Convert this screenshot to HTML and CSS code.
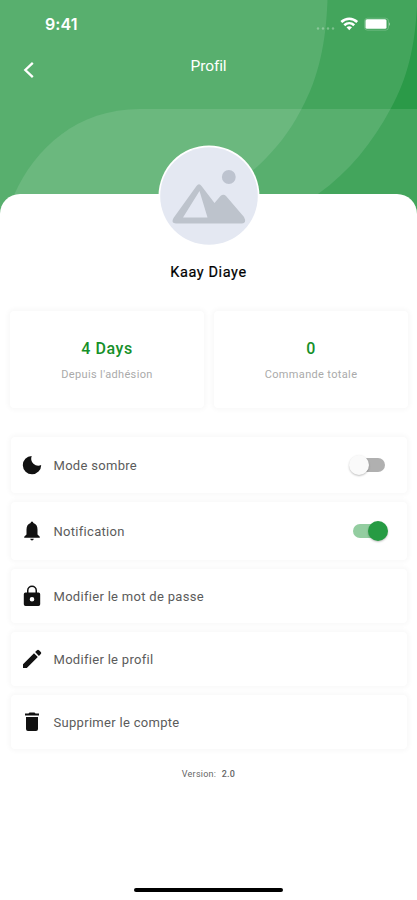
FILE: index.html
```html
<!DOCTYPE html>
<html lang="fr">
<head>
<meta charset="utf-8">
<meta name="viewport" content="width=device-width, initial-scale=1">
<title>Profil</title>
<link rel="stylesheet" href="styles.css">
</head>
<body>
<div class="screen">
  <header class="header">
    <svg class="backdrop" viewBox="0 0 417 220" aria-hidden="true">
      <path class="wave" d="M0 0H327.500C326 42 319 77 301.500 109C289 133 276 149 258 166C240 182 225 190 200 200L190 220H0Z"/>
      <path class="wave" d="M0 0H417V6C415 45 408 78 390.500 109C373 142 349 172 318 194C305 204 290 212 270 220H0Z"/>
      <path class="wave" d="M14 195C35 148 77 109 140 109H417V220H14Z"/>
    </svg>
    <div class="status">
      <span class="time">9:41</span>
      <svg class="indicators" width="76" height="20" viewBox="0 0 76 20">
        <g fill="#fff" opacity=".3"><circle cx="2" cy="14.500" r="1.200"/><circle cx="7" cy="14.500" r="1.200"/><circle cx="12" cy="14.500" r="1.200"/><circle cx="17" cy="14.500" r="1.200"/></g>
        <g fill="none" stroke="#fff" stroke-width="2.600"><path d="M25.300 8C30 3.600 36.500 3.600 41.200 8"/><path d="M28.300 11.300C31.300 8.500 35.200 8.500 38.200 11.300"/></g>
        <path d="M30.500 13.300Q33.250 11.100 36 13.300L33.250 16.200Z" fill="#fff"/>
        <rect x="48.500" y="4.200" width="24" height="12" rx="3" fill="none" stroke="#fff" opacity=".2"/>
        <rect x="49.500" y="5.200" width="21" height="9.600" rx="1.500" fill="#fff"/>
        <path d="M73 8.200Q75 10 73 12Z" fill="#fff" opacity=".5"/>
      </svg>
    </div>
    <div class="topbar">
      <svg class="back" width="14" height="18" viewBox="0 0 14 18"><path d="M12.800 1.800L5.300 9L12.800 16.200"/></svg>
      <h1>Profil</h1>
    </div>
  </header>
  <main class="sheet">
    <svg class="avatar" width="102" height="102" viewBox="0 0 102 102">
      <circle cx="51" cy="51" r="50.500" fill="#fff"/>
      <circle cx="51" cy="51" r="48.800" fill="#e4e8f2"/>
      <circle cx="70.800" cy="32" r="6.900" fill="#bdc3cf"/>
      <path d="M15.500 73L38.500 41Q41 37.500 43.500 41L56.500 58L62.500 51Q65.500 48.500 68 51L86 72Q89 78 84 78.500H18Q12.500 78 15.500 73ZM41.500 46L25 72.500H49.500Z" fill="#bdc3cc" fill-rule="evenodd"/>
    </svg>
    <h2 class="name">Kaay Diaye</h2>
    <section class="stats">
      <div class="stat"><strong>4 Days</strong><span class="caption">Depuis l'adhésion</span></div>
      <div class="stat"><strong>0</strong><span class="caption">Commande totale</span></div>
    </section>
    <section class="options">
      <div class="row theme">
        <svg class="icon" viewBox="0 0 20 20"><path d="M9.700.9A7.200 7.200 0 0 0 19.200 10.100A9.200 9.200 0 1 1 9.700.9Z"/></svg>
        <span class="label">Mode sombre</span><span class="switch"></span>
      </div>
      <div class="row alerts">
        <svg class="icon" viewBox="0 0 20 20"><path d="M10 .5Q11.300.5 11.400 2Q15.500 3.400 15.500 8.500V13.500L17.800 15.800V16.700H2.200V15.800L4.500 13.500V8.500Q4.500 3.400 8.600 2Q8.700.5 10 .5ZM8.200 17.700H11.800Q11.500 19.500 10 19.500Q8.500 19.500 8.200 17.700Z"/></svg>
        <span class="label">Notification</span><span class="switch on"></span>
      </div>
      <div class="row">
        <svg class="icon lock" viewBox="0 0 20 22"><path fill-rule="evenodd" d="M3.500 7.500H5V5.500A5 5 0 0 1 15 5.500V7.500H16.500Q18.200 7.500 18.200 9.200V19.300Q18.200 21 16.500 21H3.500Q1.800 21 1.800 19.300V9.200Q1.800 7.500 3.500 7.500ZM6.500 7.500H13.500V5.500A3.500 3.500 0 0 0 6.500 5.500ZM10 12A2.300 2.300 0 1 0 10 16.600A2.300 2.300 0 1 0 10 12Z"/></svg>
        <span class="label">Modifier le mot de passe</span>
      </div>
      <div class="row">
        <svg class="icon" viewBox="0 0 20 20"><path d="M1 15.200L12 4.200L15.800 8L4.800 19H1ZM13.100 3.100L15 1.200Q16 .3 17 1.200L18.800 3Q19.800 4 18.800 5L16.900 6.900Z"/></svg>
        <span class="label">Modifier le profil</span>
      </div>
      <div class="row">
        <svg class="icon" viewBox="0 0 20 20"><path d="M3 1.500H6.500L7.500.5H12.500L13.500 1.500H17V3.500H3ZM4 5H16V17Q16 19 14 19H6Q4 19 4 17Z"/></svg>
        <span class="label">Supprimer le compte</span>
      </div>
    </section>
    <p class="version">Version: <b>2.0</b></p>
  </main>
  <div class="home"></div>
</div>
</body>
</html>
```
FILE: styles.css
```css
* { box-sizing: border-box; }
body { margin: 0; background: #fff; font-family: Roboto, "Liberation Sans", sans-serif; }
h1, h2, p { margin: 0; }
.screen { position: relative; height: 900px; display: flex; flex-direction: column; overflow: hidden; isolation: isolate; background: #fff; }
.header { height: 194px; flex: none; color: #fff; }
.backdrop { position: absolute; z-index: -1; top: 0; left: 0; width: 417px; height: 220px; background: #2b9a48; }
.wave { fill: #fff; fill-opacity: .115; }
.status { height: 48px; padding: 14px 25px 0 45px; display: flex; justify-content: space-between; }
.time { font: 600 16px/21px Inter, sans-serif; letter-spacing: .1px; }
.topbar { display: grid; grid-template-columns: 40px 1fr 40px; padding: 0 20px; height: 36px; align-items: center; }
.back { margin-top: 7px; }
.back path { fill: none; stroke: #fff; stroke-width: 2.3; }
.topbar h1 { text-align: center; font-size: 15.5px; line-height: 20px; font-weight: 400; letter-spacing: -.1px; margin-top: -1px; }
.sheet { flex: 1; display: flex; flex-direction: column; align-items: center; background: #fff; border-radius: 20px 20px 0 0; }
.avatar { margin-top: -49px; flex: none; }
.name { margin-top: 16px; font-size: 14.5px; line-height: 20px; font-weight: 400; letter-spacing: .6px; color: #000; -webkit-text-stroke: .2px; }
.stats { width: 100%; padding: 0 9px 0 10px; margin-top: 28px; display: grid; grid-template-columns: 194px 194px; gap: 10px; }
.stat { height: 97px; display: flex; flex-direction: column; align-items: center; padding-top: 28px; }
.stat, .row { background: #fff; border-radius: 4px; box-shadow: 0 0 5px 2px rgba(0, 0, 0, .03); }
.stat strong { color: #159029; font-size: 16px; line-height: 20px; font-weight: 500; letter-spacing: .6px; }
.caption { margin-top: 8px; color: #aaa; font-size: 11px; line-height: 16px; letter-spacing: .35px; }
.options { width: 396px; margin-top: 29px; display: flex; flex-direction: column; gap: 9px; }
.row { height: 54px; display: flex; align-items: center; padding: 0 19px 0 11px; }
.row.theme { height: 56px; }
.row.alerts { height: 58px; }
.icon { width: 20px; height: 20px; margin-right: 12px; fill: #111; }
.icon.lock { height: 22px; }
.label { color: #5b5b5b; font-size: 13px; line-height: 18px; letter-spacing: .3px; flex: 1; padding-top: 1px; }
.switch { position: relative; width: 32px; height: 14px; border-radius: 7px; background: #b0b0b0; margin-right: 3px; }
.switch::before { content: ""; position: absolute; top: -3px; left: -4px; width: 20px; height: 20px; border-radius: 50%; background: #fafafa; box-shadow: 0 1px 2px rgba(0, 0, 0, .25); }
.switch.on { background: #93cda0; }
.switch.on::before { left: 15px; background: #269b43; }
.version { margin-top: 19px; font-size: 9px; line-height: 12px; color: #666; letter-spacing: .25px; white-space: pre; }
.version b { margin-left: 3px; font-weight: 500; }
.home { height: 4px; width: 149px; border-radius: 2px; background: #000; margin: 0 auto 8px; flex: none; }
```
